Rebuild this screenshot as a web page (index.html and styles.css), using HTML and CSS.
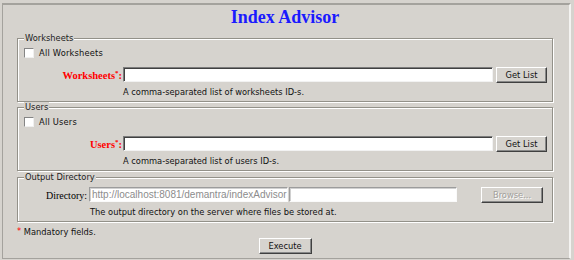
FILE: index.html
```html
<!DOCTYPE html>
<html lang="en">
<head>
    <meta charset="UTF-8">
    <title>Index Advisor</title>
    <link rel="stylesheet" href="styles.css">
</head>
<body>
    <div class="panel">
        <h1 class="title">Index Advisor</h1>

        <fieldset class="group">
            <legend>Worksheets</legend>
            <label class="check"><input type="checkbox">All Worksheets</label>
            <div class="field">
                <span class="field-label">Worksheets<sup>*</sup>:</span>
                <input type="text" class="text wide">
                <button class="btn list">Get List</button>
            </div>
            <div class="hint">A comma-separated list of worksheets ID-s.</div>
        </fieldset>

        <fieldset class="group">
            <legend>Users</legend>
            <label class="check"><input type="checkbox">All Users</label>
            <div class="field">
                <span class="field-label">Users<sup>*</sup>:</span>
                <input type="text" class="text wide">
                <button class="btn list">Get List</button>
            </div>
            <div class="hint">A comma-separated list of users ID-s.</div>
        </fieldset>

        <fieldset class="group output">
            <legend>Output Directory</legend>
            <div class="field dir">
                <span class="dir-label">Directory:</span>
                <input type="text" class="text dim path" value="http://localhost:8081/demantra/indexAdvisor">
                <input type="text" class="text dim extra">
                <button class="btn browse" disabled>Browse...</button>
            </div>
            <div class="hint dir-hint">The output directory on the server where files be stored at.</div>
        </fieldset>

        <p class="note"><span class="req">*</span> Mandatory fields.</p>
        <div class="actions">
            <button class="btn exec">Execute</button>
        </div>
    </div>
</body>
</html>
```

FILE: styles.css
```css
* {
    box-sizing: border-box;
}

body {
    margin: 0;
    background: #d6d3ce;
    font-family: "DejaVu Sans", Verdana, sans-serif;
    font-size: 8.3px;
    color: #111;
}

.panel {
    margin: 3px 0 0 2px;
    width: 569px;
    height: 256px;
    border-style: solid;
    border-width: 2px 2px 1px 1px;
    border-color: #a4a29d #f4f3f1 #a4a29d #a4a29d;
    padding: 0 16px 0 14px;
}

.title {
    margin: 1px 0 5px;
    font: bold 18px/22px "Liberation Serif", "Times New Roman", serif;
    color: #1a1aff;
    text-align: center;
}

.group {
    margin: 0;
    min-width: 0;
    border: 1px solid #939189;
    box-shadow: inset 1px 1px 0 #fff, 1px 1px 0 #fff;
    padding: 3px 5px 3px 6px;
}

.group.output {
    margin-top: 1px;
    padding-top: 5px;
}

.group legend {
    padding: 0 1px;
    line-height: 10px;
    background: #d6d3ce;
    color: #222;
}

.check {
    display: flex;
    align-items: center;
    height: 14px;
    letter-spacing: 0.2px;
}

.check input {
    -webkit-appearance: none;
    appearance: none;
    margin: 0 5px 0 0;
    width: 10px;
    height: 10px;
    background: #fff;
    border: 1px solid;
    border-color: #858585 #f0f0f0 #f0f0f0 #858585;
}

.field {
    display: flex;
    align-items: center;
    height: 16px;
    margin-top: 7px;
}

.field.dir {
    margin-top: 0;
}

.field-label {
    width: 98px;
    margin-right: 1px;
    text-align: right;
    font: bold 10.5px "Liberation Serif", "Times New Roman", serif;
    color: #f00;
}

.field-label sup {
    font-size: 7px;
    line-height: 0;
    vertical-align: 4px;
}

.dir-label {
    width: 63px;
    margin-right: 2px;
    text-align: right;
    font: 10px "Liberation Serif", "Times New Roman", serif;
    color: #000;
}

.text {
    align-self: flex-start;
    height: 15px;
    margin: 0;
    padding: 0 2px;
    background: #fff;
    border: 1px solid;
    border-color: #7c7c7c #f2f2f2 #f2f2f2 #7c7c7c;
    box-shadow: inset 1px 1px 0 #404040;
    font: 10px "Liberation Sans", Arial, sans-serif;
    outline: none;
}

.text.dim {
    border-color: #9c9c9c #fafafa #fafafa #9c9c9c;
    box-shadow: inset 1px 1px 0 #d0d0d0;
}

.wide {
    width: 370px;
}

.path {
    width: 199px;
    padding: 0 0 0 2px;
    color: #8c8c8c;
}

.extra {
    width: 168px;
    margin-left: 1px;
}

.btn {
    align-self: flex-start;
    height: 16px;
    margin: 0;
    padding: 0;
    font: 8.3px "DejaVu Sans", Verdana, sans-serif;
    color: #111;
    background: #d6d3ce;
    border: 1px solid;
    border-color: #fff #404040 #404040 #fff;
    box-shadow: inset -1px -1px 0 #888;
}

.list {
    width: 51px;
    margin-left: 3px;
}

.browse {
    width: 62px;
    margin-left: 24px;
    color: #a2a09b;
    text-shadow: 1px 1px 0 #fff;
}

.hint {
    height: 12px;
    margin: 3px 0 0 99px;
    line-height: 12px;
}

.hint.dir-hint {
    margin-left: 66px;
}

.note {
    margin: 3px 0 0;
    line-height: 12px;
}

.req {
    color: #f00;
    vertical-align: 1px;
}

.actions {
    text-align: center;
}

.exec {
    width: 53px;
}
```
